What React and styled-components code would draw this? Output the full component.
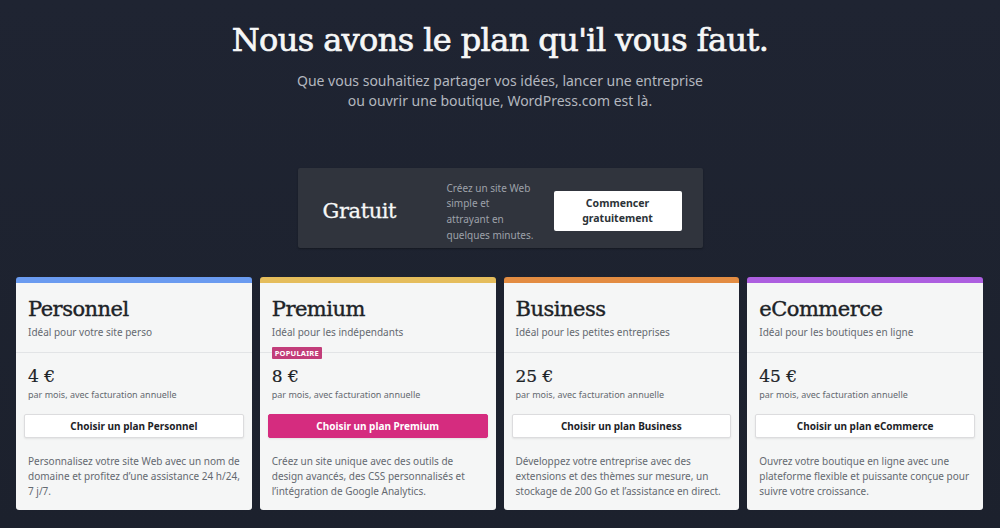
import styled, { createGlobalStyle } from "styled-components";

const GlobalStyle = createGlobalStyle`
  * { box-sizing: border-box; }
  body {
    margin: 0;
    background: #1d2230;
    font-family: "Noto Sans", "Open Sans", sans-serif;
  }
`;

const plans = [
  {
    name: "Personnel",
    tagline: "Idéal pour votre site perso",
    price: "4 €",
    color: "#6a9bf0",
    cta: "Choisir un plan Personnel",
    lines: [
      "Personnalisez votre site Web avec un nom de",
      "domaine et profitez d’une assistance 24 h/24,",
      "7 j/7.",
    ],
  },
  {
    name: "Premium",
    tagline: "Idéal pour les indépendants",
    price: "8 €",
    color: "#e5bd5c",
    cta: "Choisir un plan Premium",
    popular: true,
    lines: [
      "Créez un site unique avec des outils de",
      "design avancés, des CSS personnalisés et",
      "l’intégration de Google Analytics.",
    ],
  },
  {
    name: "Business",
    tagline: "Idéal pour les petites entreprises",
    price: "25 €",
    color: "#e38c42",
    cta: "Choisir un plan Business",
    lines: [
      "Développez votre entreprise avec des",
      "extensions et des thèmes sur mesure, un",
      "stockage de 200 Go et l’assistance en direct.",
    ],
  },
  {
    name: "eCommerce",
    tagline: "Idéal pour les boutiques en ligne",
    price: "45 €",
    color: "#ad5fe0",
    cta: "Choisir un plan eCommerce",
    lines: [
      "Ouvrez votre boutique en ligne avec une",
      "plateforme flexible et puissante conçue pour",
      "suivre votre croissance.",
    ],
  },
];

const freeLines = ["Créez un site Web", "simple et", "attrayant en", "quelques minutes."];

// keeps the reference's line breaks
const Lines = ({ items }) =>
  items.map((line, i) => (
    <span key={i}>
      {line}
      {i < items.length - 1 && <br />}
    </span>
  ));

const App = () => {
  return (
    <Page>
      <GlobalStyle />
      <Hero>
        <Heading>Nous avons le plan qu'il vous faut.</Heading>
        <Lead>
          Que vous souhaitiez partager vos idées, lancer une entreprise
          <br />
          ou ouvrir une boutique, WordPress.com est là.
        </Lead>
      </Hero>

      <FreeBox>
        <FreeName>Gratuit</FreeName>
        <FreeText>
          <Lines items={freeLines} />
        </FreeText>
        <FreeButton>
          Commencer
          <br />
          gratuitement
        </FreeButton>
      </FreeBox>

      <Cards>
        {plans.map((p) => (
          <Card key={p.name} $accent={p.color}>
            <CardHead>
              <PlanName>{p.name}</PlanName>
              <Tagline>{p.tagline}</Tagline>
              {p.popular && <Badge>POPULAIRE</Badge>}
            </CardHead>
            <CardBody>
              <Price>{p.price}</Price>
              <Billing>par mois, avec facturation annuelle</Billing>
              <PlanButton $primary={p.popular}>{p.cta}</PlanButton>
              <Description>
                <Lines items={p.lines} />
              </Description>
            </CardBody>
          </Card>
        ))}
      </Cards>
    </Page>
  );
};

const Page = styled.div`
  width: 1000px;
  height: 528px;
  overflow: hidden;
  background: linear-gradient(180deg, #1f2432 0%, #1c212d 100%);
  padding-top: 18px;
`;

const Hero = styled.header`
  text-align: center;
`;

const Heading = styled.h1`
  margin: 0;
  font-family: "DejaVu Serif", "Liberation Serif", serif;
  font-weight: 400;
  font-size: 32px;
  line-height: 44px;
  letter-spacing: -0.6px;
  color: #f6f7f7;
  -webkit-text-stroke: 0.7px #f6f7f7;
`;

const Lead = styled.p`
  margin: 9px 0 0;
  font-size: 14px;
  line-height: 20px;
  color: #b3b7bf;
`;

const FreeBox = styled.section`
  width: 405px;
  height: 80px;
  margin: 57px auto 29px;
  background: #30343d;
  border-radius: 2px;
  display: flex;
  align-items: center;
  padding: 6px 21px 0 25px;
  box-shadow: 0 1px 2px rgba(0, 0, 0, 0.3);
`;

const FreeName = styled.div`
  width: 124px;
  font-family: "DejaVu Serif", "Liberation Serif", serif;
  font-size: 21px;
  color: #f6f7f7;
  letter-spacing: -0.4px;
  -webkit-text-stroke: 0.3px #f6f7f7;
`;

const FreeText = styled.p`
  margin: 2px 0 0;
  white-space: nowrap;
  font-size: 10px;
  line-height: 15.7px;
  color: #9ea2aa;
`;

const FreeButton = styled.div`
  margin-left: auto;
  width: 128px;
  height: 40px;
  background: #ffffff;
  border-radius: 2px;
  display: flex;
  align-items: center;
  justify-content: center;
  text-align: center;
  font-size: 10.5px;
  font-weight: 700;
  line-height: 15px;
  color: #2c3338;
`;

const Cards = styled.div`
  display: grid;
  grid-template-columns: repeat(4, 1fr);
  gap: 8px;
  padding: 0 17px 0 16px;
`;

const Card = styled.article`
  height: 233px;
  background: #f5f6f6;
  border-radius: 3px;
  border-top: 6px solid ${({ $accent }) => $accent};
  overflow: hidden;
`;

const CardHead = styled.div`
  position: relative;
  padding: 11px 12px 12px;
  border-bottom: 1px solid #e2e4e6;
`;

const PlanName = styled.h2`
  margin: 0;
  font-family: "DejaVu Serif", "Liberation Serif", serif;
  font-weight: 400;
  font-size: 21px;
  line-height: 30px;
  letter-spacing: -0.5px;
  color: #1d2327;
  -webkit-text-stroke: 0.4px #1d2327;
`;

const Tagline = styled.div`
  font-size: 10px;
  line-height: 16px;
  color: #646970;
`;

const Badge = styled.span`
  position: absolute;
  left: 12px;
  bottom: -7px;
  padding: 0 3px;
  height: 12px;
  line-height: 12px;
  border-radius: 1px;
  background: #c23d7a;
  color: #fff;
  font-size: 7.5px;
  font-weight: 700;
  letter-spacing: 0.2px;
`;

const CardBody = styled.div`
  padding: 11px 12px 0;
`;

const Price = styled.div`
  font-family: "DejaVu Serif", "Liberation Serif", serif;
  font-size: 17px;
  line-height: 24px;
  color: #1d2327;
  -webkit-text-stroke: 0.2px #1d2327;
`;

const Billing = styled.div`
  font-size: 9px;
  line-height: 14px;
  color: #646970;
`;

const PlanButton = styled.div`
  margin: 12px -4px 0;
  height: 24px;
  display: flex;
  align-items: center;
  justify-content: center;
  border-radius: 2px;
  font-size: 10px;
  font-weight: 700;
  background: ${({ $primary }) => ($primary ? "#d52c7f" : "#ffffff")};
  color: ${({ $primary }) => ($primary ? "#ffffff" : "#1d2327")};
  border: 1px solid ${({ $primary }) => ($primary ? "#d52c7f" : "#dcdcde")};
  box-shadow: 0 1px 2px rgba(0, 0, 0, 0.08);
`;

const Description = styled.p`
  margin: 16px -4px 0 0;
  white-space: nowrap;
  font-size: 10px;
  line-height: 15px;
  color: #646970;
`;

export default App;
